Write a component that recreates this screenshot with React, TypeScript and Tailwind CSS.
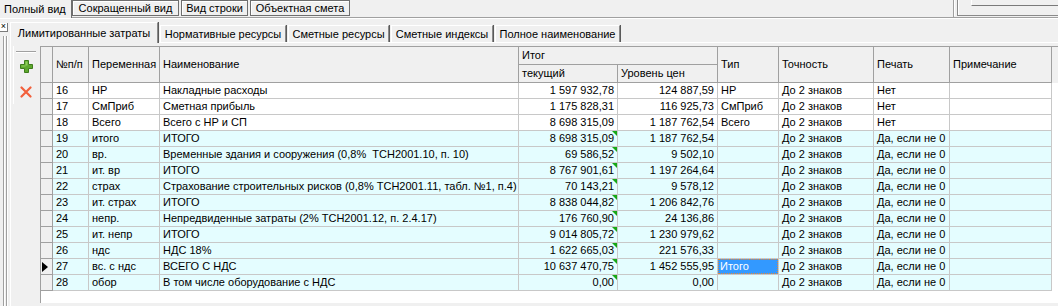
const COLS =
  "grid grid-cols-[12px_36px_71px_359px_99px_100px_61px_95px_76px_102px]";

type Row = {
  n: string;
  v: string;
  name: string;
  cur: string;
  lvl: string;
  type: string;
  prec: string;
  print: string;
  hl: boolean;
};

const rows: Row[] = [
  { n: "16", v: "НР", name: "Накладные расходы", cur: "1 597 932,78", lvl: "124 887,59", type: "НР", prec: "До 2 знаков", print: "Нет", hl: false },
  { n: "17", v: "СмПриб", name: "Сметная прибыль", cur: "1 175 828,31", lvl: "116 925,73", type: "СмПриб", prec: "До 2 знаков", print: "Нет", hl: false },
  { n: "18", v: "Всего", name: "Всего с НР и СП", cur: "8 698 315,09", lvl: "1 187 762,54", type: "Всего", prec: "До 2 знаков", print: "Нет", hl: false },
  { n: "19", v: "итого", name: "ИТОГО", cur: "8 698 315,09", lvl: "1 187 762,54", type: "", prec: "До 2 знаков", print: "Да, если не 0", hl: true },
  { n: "20", v: "вр.", name: "Временные здания и сооружения (0,8%  ТСН2001.10, п. 10)", cur: "69 586,52", lvl: "9 502,10", type: "", prec: "До 2 знаков", print: "Да, если не 0", hl: true },
  { n: "21", v: "ит. вр", name: "ИТОГО", cur: "8 767 901,61", lvl: "1 197 264,64", type: "", prec: "До 2 знаков", print: "Да, если не 0", hl: true },
  { n: "22", v: "страх", name: "Страхование строительных рисков (0,8% ТСН2001.11, табл. №1, п.4)", cur: "70 143,21", lvl: "9 578,12", type: "", prec: "До 2 знаков", print: "Да, если не 0", hl: true },
  { n: "23", v: "ит. страх", name: "ИТОГО", cur: "8 838 044,82", lvl: "1 206 842,76", type: "", prec: "До 2 знаков", print: "Да, если не 0", hl: true },
  { n: "24", v: "непр.", name: "Непредвиденные затраты (2% ТСН2001.12, п. 2.4.17)", cur: "176 760,90", lvl: "24 136,86", type: "", prec: "До 2 знаков", print: "Да, если не 0", hl: true },
  { n: "25", v: "ит. непр", name: "ИТОГО", cur: "9 014 805,72", lvl: "1 230 979,62", type: "", prec: "До 2 знаков", print: "Да, если не 0", hl: true },
  { n: "26", v: "ндс", name: "НДС 18%", cur: "1 622 665,03", lvl: "221 576,33", type: "", prec: "До 2 знаков", print: "Да, если не 0", hl: true },
  { n: "27", v: "вс. с ндс", name: "ВСЕГО С НДС", cur: "10 637 470,75", lvl: "1 452 555,95", type: "Итого", prec: "До 2 знаков", print: "Да, если не 0", hl: true },
  { n: "28", v: "обор", name: "В том числе оборудование с НДС", cur: "0,00", lvl: "0,00", type: "", prec: "До 2 знаков", print: "Да, если не 0", hl: true },
];

function TopTab({ label, w }: { label: string; w: string }) {
  return (
    <div
      className={`${w} h-[16px] mr-[2px] border border-[#6e6e6e] shadow-[inset_1px_1px_0_#fff] flex items-center justify-center`}
    >
      {label}
    </div>
  );
}

function InnerTab({ label, w }: { label: string; w: string }) {
  return (
    <div
      className={`${w} h-[17px] mt-[5px] mr-[2px] border-t border-l border-white border-r border-r-[#8a8a8a] shadow-[1px_0_0_#5a5a5a] flex items-center justify-center`}
    >
      {label}
    </div>
  );
}

function PlusIcon() {
  return (
    <svg width="13" height="13" viewBox="0 0 13 13">
      <path
        d="M4.5 0.5h4v4h4v4h-4v4h-4v-4h-4v-4h4z"
        fill="#5ea82e"
        stroke="#3e7d1c"
        strokeWidth="1"
      />
      <path d="M5.5 1.5h2v4h-2zM1.5 5.5h4v1h-4z" fill="#8fd05a" />
    </svg>
  );
}

function CrossIcon() {
  return (
    <svg width="12" height="12" viewBox="0 0 12 12">
      <path
        d="M1.5 1.5L10.5 10.5M10.5 1.5L1.5 10.5"
        stroke="#f2603c"
        strokeWidth="2.2"
        strokeLinecap="round"
      />
    </svg>
  );
}

export default function App() {
  const hcell =
    "bg-[#f0f0f0] border-r border-b border-[#a0a0a0] pl-[3px] flex items-center overflow-hidden whitespace-nowrap";
  const dcell =
    "border-r border-b border-[#c8c8c8] pl-[3px] flex items-center overflow-hidden whitespace-pre";
  const ncell =
    "relative border-r border-b border-[#c8c8c8] pr-[3px] flex items-center justify-end overflow-hidden whitespace-nowrap";

  return (
    <div className="w-[1058px] h-[306px] overflow-hidden bg-[#f0f0f0] text-black text-[11px] leading-[13px] font-['Liberation_Sans',Arial,sans-serif]">
      {/* top view tabs */}
      <div className="flex h-[18px]">
        <div className="w-[72px] h-[18px] border-r border-[#6e6e6e] pl-[4px] flex items-center">
          Полный вид
        </div>
        <div className="flex flex-1 border-b border-[#a0a0a0]">
          <TopTab label="Сокращенный вид" w="w-[107px]" />
          <TopTab label="Вид строки" w="w-[67px]" />
          <TopTab label="Объектная смета" w="w-[100px]" />
          <div className="flex-1" />
          <div className="w-px h-[17px] bg-[#a0a0a0]" />
          <div className="w-[3px] h-[16px] border-l border-white" />
          <div className="w-[101px] h-[16px] border-l border-b border-[#8a8a8a] shadow-[inset_1px_0_0_#fff]">
            <div className="ml-[13px] h-[6px] border-l border-white border-b border-b-[#7a7a7a]" />
          </div>
        </div>
      </div>
      <div className="h-[2px] border-t border-white" />

      <div className="flex h-[286px]">
        {/* docked strip */}
        <div className="w-[10px] flex flex-col">
          <div className="mt-[3px] w-[8px] h-[9px] border-r border-b border-[#7a7a7a] bg-white text-[9px] leading-[7px] text-center">
            ×
          </div>
          <div className="flex flex-1 mt-[4px] ml-[3px]">
            <div className="w-px bg-[#a0a0a0]" />
            <div className="w-px bg-white" />
            <div className="w-px" />
            <div className="w-px bg-[#a0a0a0]" />
            <div className="w-px bg-white" />
          </div>
        </div>

        {/* main */}
        <div className="flex-1 flex flex-col min-w-0">
          <div className="flex h-[22px] items-start">
            <div className="relative z-10 w-[148px] h-[21px] mt-[2px] border-t border-l border-white border-r border-r-[#8a8a8a] shadow-[1px_0_0_#5a5a5a] bg-[#f0f0f0] flex items-center justify-center mr-[2px]">
              Лимитированные затраты
            </div>
            <InnerTab label="Нормативные ресурсы" w="w-[126px]" />
            <InnerTab label="Сметные ресурсы" w="w-[101px]" />
            <InnerTab label="Сметные индексы" w="w-[102px]" />
            <InnerTab label="Полное наименование" w="w-[125px]" />
          </div>

          <div className="flex-1 flex border-t border-l border-white pt-[3px] min-h-0">
            {/* toolbar */}
            <div className="ml-[2px] w-[25px] h-[58px] border-l border-white flex flex-col items-center">
              <div className="mt-[5px] w-[20px] h-[2px] border-t border-[#a0a0a0] border-b border-b-white" />
              <div className="mt-[7px] h-[13px] flex items-center">
                <PlusIcon />
              </div>
              <div className="mt-[13px] h-[12px] flex items-center">
                <CrossIcon />
              </div>
            </div>

            {/* grid */}
            <div className="ml-[2px] flex-1 h-[257px] bg-white border-t border-l border-[#a0a0a0] overflow-hidden">
              <div className="flex bg-[#f0f0f0]">
                <div className={`${COLS} grid-rows-[18px_18px] shrink-0`}>
                  <div className={`${hcell} row-span-2`} />
                  <div className={`${hcell} row-span-2`}>№п/п</div>
                  <div className={`${hcell} row-span-2`}>Переменная</div>
                  <div className={`${hcell} row-span-2`}>Наименование</div>
                  <div className={`${hcell} col-span-2`}>Итог</div>
                  <div className={`${hcell} row-span-2`}>Тип</div>
                  <div className={`${hcell} row-span-2`}>Точность</div>
                  <div className={`${hcell} row-span-2`}>Печать</div>
                  <div className={`${hcell} row-span-2`}>Примечание</div>
                  <div className={hcell}>текущий</div>
                  <div className={hcell}>Уровень цен</div>
                </div>
              </div>

              {rows.map((r) => {
                const bg = r.hl ? "bg-[#e4fdff]" : "bg-white";
                const sel = r.type === "Итого";
                return (
                  <div key={r.n} className={`${COLS} grid-rows-[16px] w-max`}>
                    <div className="bg-[#f0f0f0] border-r border-b border-[#a0a0a0] flex items-center pl-[1px] overflow-hidden">
                      {r.n === "27" && (
                        <div className="w-0 h-0 border-y-[5px] border-y-transparent border-l-[6px] border-l-black" />
                      )}
                    </div>
                    <div className={`${dcell} ${bg}`}>{r.n}</div>
                    <div className={`${dcell} ${bg}`}>{r.v}</div>
                    <div className={`${dcell} ${bg}`}>{r.name}</div>
                    <div className={`${ncell} ${bg}`}>
                      {r.cur}
                      {r.hl && (
                        <div className="absolute top-0 right-0 w-0 h-0 border-t-[5px] border-t-[#16a816] border-l-[5px] border-l-transparent" />
                      )}
                    </div>
                    <div className={`${ncell} ${bg}`}>{r.lvl}</div>
                    {sel ? (
                      <div className="border-r border-b border-[#c8c8c8] flex overflow-hidden">
                        <div className="flex-1 bg-[#3399ff] text-white border border-dotted border-[#e0883a] pl-[1px] flex items-center">
                          {r.type}
                        </div>
                      </div>
                    ) : (
                      <div className={`${dcell} ${bg}`}>{r.type}</div>
                    )}
                    <div className={`${dcell} ${bg}`}>{r.prec}</div>
                    <div className={`${dcell} ${bg}`}>{r.print}</div>
                    <div className={`${dcell} ${bg}`} />
                  </div>
                );
              })}
            </div>
          </div>
        </div>
      </div>
    </div>
  );
}
